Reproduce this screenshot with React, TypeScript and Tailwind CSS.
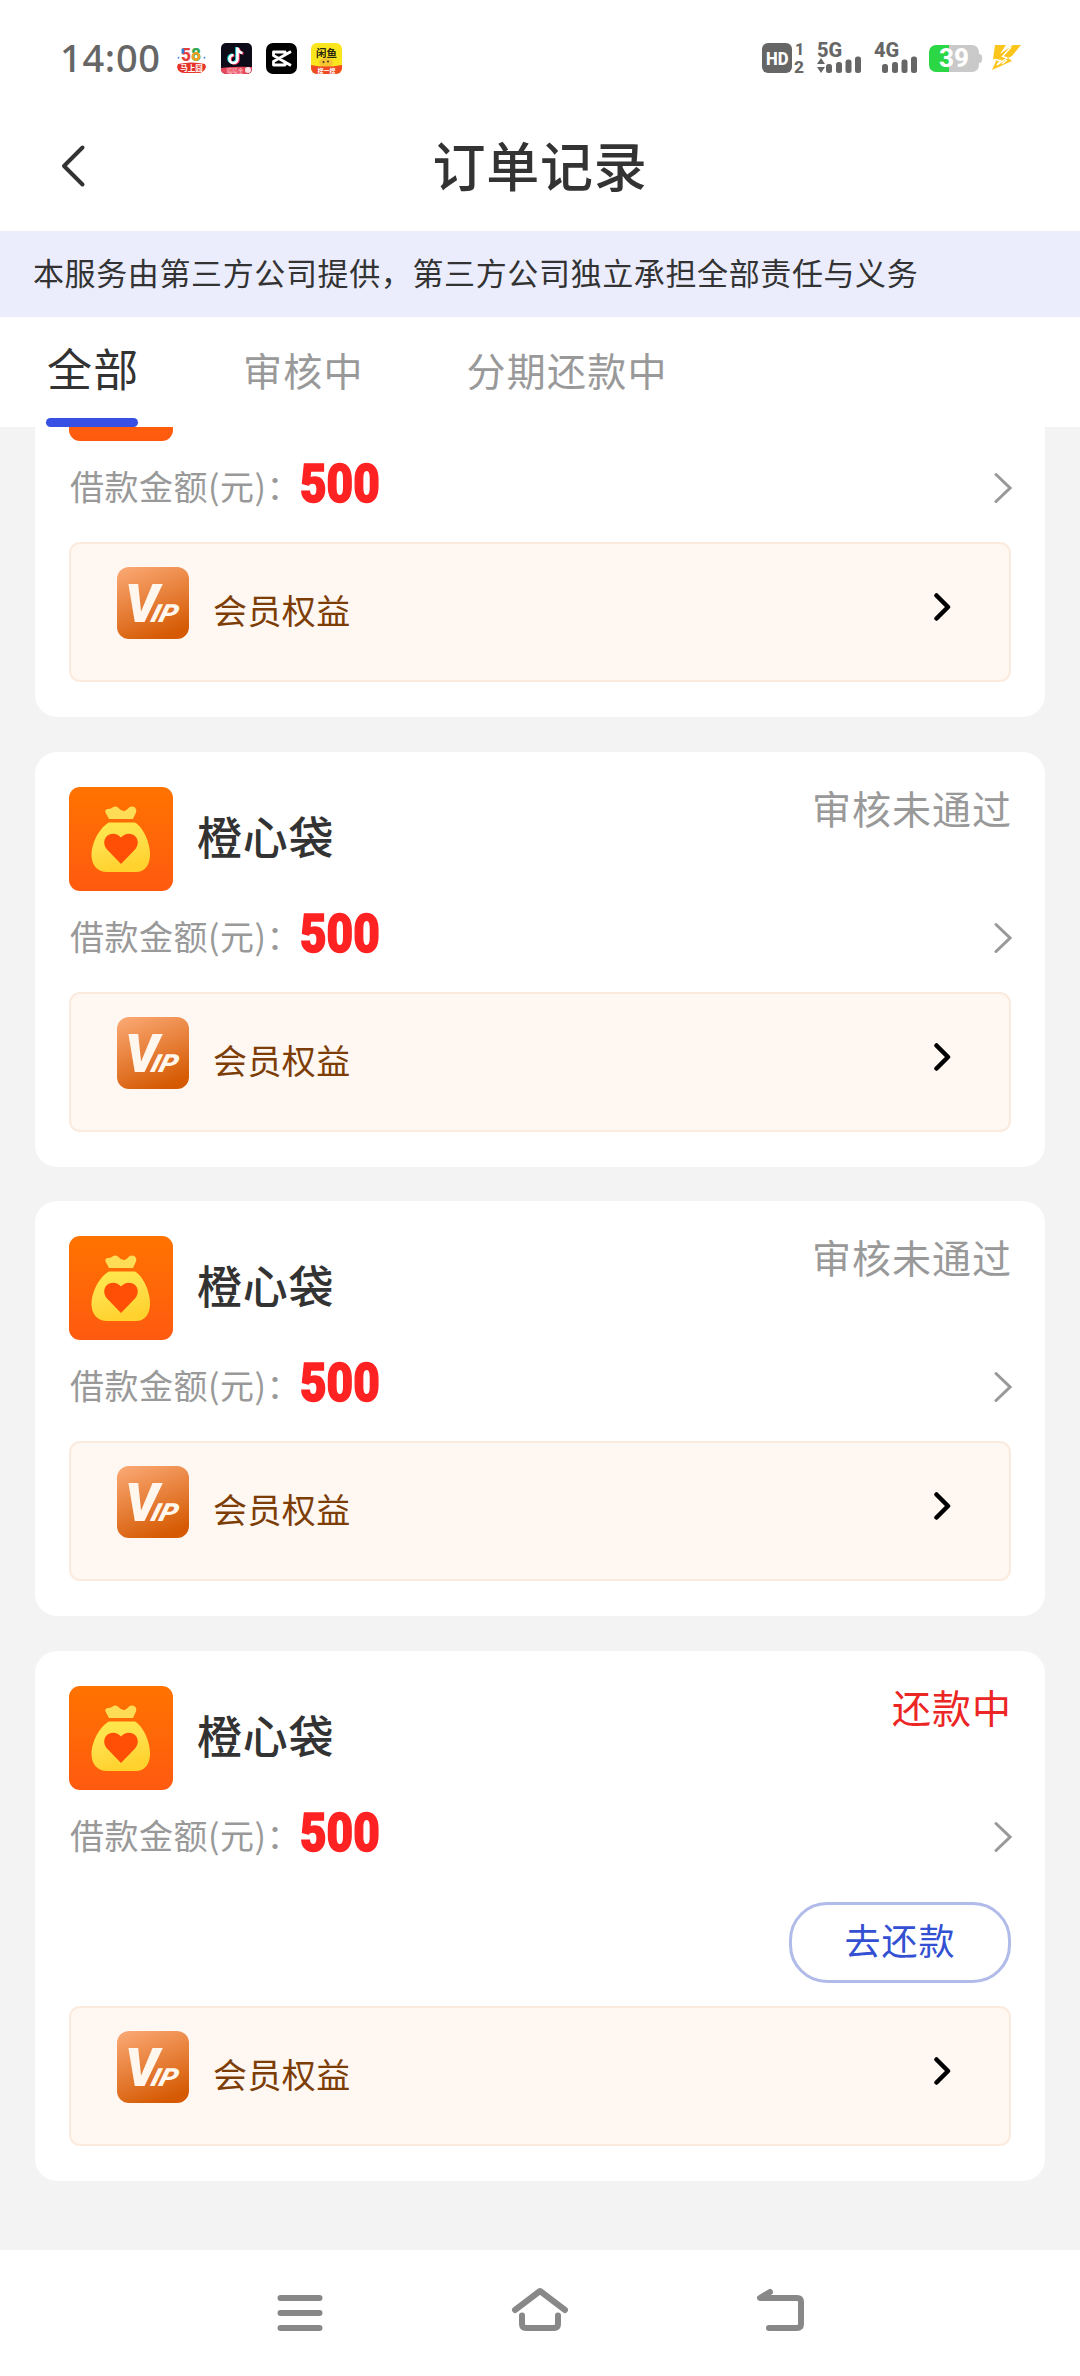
import { clsx } from 'clsx';

type OrderStatus = 'rejected' | 'repaying';

interface Order {
    id: number;
    name: string;
    amount: number;
    status: OrderStatus;
}

const orders: Order[] = [
    { id: 1, name: '橙心袋', amount: 500, status: 'rejected' },
    { id: 2, name: '橙心袋', amount: 500, status: 'rejected' },
    { id: 3, name: '橙心袋', amount: 500, status: 'rejected' },
    { id: 4, name: '橙心袋', amount: 500, status: 'repaying' },
];

const statusText: Record<OrderStatus, string> = {
    rejected: '审核未通过',
    repaying: '还款中',
};

function SignalBars() {
    return (
        <svg className="w-[36px] h-[17px]" viewBox="0 0 36 17" fill="#666">
            <rect x="0" y="8" width="6" height="9" rx="2.5" />
            <rect x="10" y="6" width="6" height="11" rx="2.5" />
            <rect x="19.5" y="3.5" width="6" height="13.5" rx="2.5" />
            <rect x="29" y="0.5" width="6" height="16.5" rx="2.5" />
        </svg>
    );
}

function AppIcons() {
    return (
        <div className="flex items-center gap-[14px] ml-[16px]">
            <svg className="w-[31px] h-[31px]" viewBox="0 0 31 31">
                <text x="5" y="17.5" fontSize="19" fontWeight="800" fontFamily="Roboto, sans-serif" fill="#e2403a" textLength="20" lengthAdjust="spacingAndGlyphs">
                    5<tspan fill="#35a853">8</tspan>
                </text>
                <circle cx="20" cy="13.300" r="3.200" fill="none" stroke="#f0a020" strokeWidth="2.400" />
                <path d="M6.800 5.500v5" fill="none" stroke="#2d7fd8" strokeWidth="2.500" />
                <path d="M3 14l-1 1.500M28 14l1 1.500" stroke="#4d8fe0" strokeWidth="1.500" />
                <path d="M2 21q13.500-3 27 0l1 3q-2 6-8 6H9q-7 0-8-6z" fill="#e5352b" />
                <text x="15.500" y="28" fontSize="7.500" fontWeight="700" textAnchor="middle" fill="#fff" fontFamily="Noto Sans CJK SC, sans-serif">马上囧</text>
            </svg>
            <svg className="w-[31px] h-[31px]" viewBox="0 0 31 31">
                <clipPath id="tk"><rect width="31" height="31" rx="5" /></clipPath>
                <g clipPath="url(#tk)">
                    <rect width="31" height="31" fill="#0d0b18" />
                    <g fill="none" strokeWidth="2.600">
                        <path d="M15.500 4v11.500a4 4 0 1 1-4-4M15.500 5q1 4 5 4.500" stroke="#29e0e5" />
                        <path d="M17.500 5v11.500a4 4 0 1 1-4-4M17.500 5q1 5 5 5.500" stroke="#f3305c" />
                        <path d="M16.500 4.500v11.500a4 4 0 1 1-4-4M16.500 5q1 4.500 5 5" stroke="#fff" />
                    </g>
                    <path d="M0 25q14-2 31-1v7H0z" fill="#e9475c" />
                    <circle cx="27" cy="27" r="3" fill="#fff" opacity=".85" />
                    <text x="14" y="30" fontSize="5.500" textAnchor="middle" fill="#ffd5da" fontFamily="Noto Sans CJK SC, sans-serif">喵喵金</text>
                </g>
            </svg>
            <svg className="w-[31px] h-[31px]" viewBox="0 0 31 31">
                <rect width="31" height="31" rx="7" fill="#000" />
                <path d="M25 8.500 7.500 18.500V22H19v-3.500M25 22.500 7.500 12.500V9H19v3.500" fill="none" stroke="#fff" strokeWidth="2.800" strokeLinejoin="round" />
            </svg>
            <svg className="w-[31px] h-[31px]" viewBox="0 0 31 31">
                <clipPath id="xy"><rect width="31" height="31" rx="6" /></clipPath>
                <g clipPath="url(#xy)">
                    <rect width="31" height="31" fill="#fbe51c" />
                    <ellipse cx="15" cy="19.500" rx="7" ry="5" fill="#f7c532" />
                    <text x="15.500" y="13.500" fontSize="10.500" fontWeight="700" textAnchor="middle" fill="#2b2610" fontFamily="Noto Sans CJK SC, sans-serif">闲鱼</text>
                    <circle cx="12.500" cy="19" r="1" fill="#332" />
                    <circle cx="17" cy="18.500" r="1" fill="#332" />
                    <path d="M0 22q15 3 31 0v9H0z" fill="#ee4a24" />
                    <text x="15.500" y="29.500" fontSize="6" fontWeight="700" textAnchor="middle" fill="#fff" fontFamily="Noto Sans CJK SC, sans-serif">搜一搜</text>
                </g>
            </svg>
        </div>
    );
}

function StatusBar() {
    return (
        <div className="flex items-center h-[116px] pl-[60px] pr-[60px] shrink-0">
            <span className="w-[100px] text-[38px] leading-none font-medium text-[#666] tracking-[0.7px] whitespace-nowrap -mt-[2px] font-['Noto_Sans','sans-serif']">
                14:00
            </span>
            <AppIcons />
            <div className="flex items-center ml-auto text-[#666]">
                <svg className="w-[45px] h-[36px] -mr-[2px]" viewBox="0 -2 45 36" fontFamily="Roboto, sans-serif" fontWeight="800">
                    <rect x="0" y="1" width="30" height="30" rx="6" fill="#666" />
                    <text x="4" y="22.500" fontSize="18" fill="#fff" textLength="22.500" lengthAdjust="spacingAndGlyphs">HD</text>
                    <text x="33" y="12.500" fontSize="16" fill="#666">1</text>
                    <text x="32" y="31" fontSize="16" fill="#666" textLength="10" lengthAdjust="spacingAndGlyphs">2</text>
                </svg>
                <div className="relative w-[45px] h-[32px] ml-[12px]">
                    <span className="absolute left-0 -top-[1px] text-[20px] leading-[18px] font-extrabold font-['Roboto','sans-serif']">5G</span>
                    <svg className="absolute left-0 top-[16px] w-[8px] h-[15px]" viewBox="0 0 8 15" fill="#666">
                        <path d="M4 0l4 6H0zM4 15l4-6H0z" />
                    </svg>
                    <div className="absolute right-0 bottom-[1px]"><SignalBars /></div>
                </div>
                <div className="relative w-[44px] h-[32px] ml-[12px]">
                    <span className="absolute left-0 -top-[1px] text-[20px] leading-[18px] font-extrabold font-['Roboto','sans-serif']">4G</span>
                    <div className="absolute right-0 bottom-[1px]"><SignalBars /></div>
                </div>
                <div className="flex items-center ml-[11px]">
                    <div className="flex items-center justify-center w-[50px] h-[27px] rounded-[7px] bg-[linear-gradient(90deg,#2bd744_40%,#c9c9c9_40%)] text-white text-[26px] leading-none font-extrabold font-['Roboto','sans-serif']">
                        39
                    </div>
                    <div className="w-[3px] h-[9px] rounded-r-sm bg-[#c9c9c9]"></div>
                </div>
                <svg className="w-[30px] h-[26px] ml-[9px] -mr-px" viewBox="0 0 30 26" fill="#fbc51b">
                    <path d="M4 0h11L9 9 22 0h8L21 11l-4 2 4 3L1 25l4-9-3-2z" />
                    <path d="M3 14.500l6.500 1L6 20l10-7-4.500-1.500L20 2M16 15l-5 4" fill="none" stroke="#fff" strokeWidth="1.400" />
                </svg>
            </div>
        </div>
    );
}

function Header() {
    return (
        <div className="relative flex items-center justify-center h-[115px] shrink-0">
            <svg className="absolute left-[60px] top-[28px] w-[26px] h-[44px]" viewBox="0 0 26 44" fill="none" stroke="#333" strokeWidth="4" strokeLinecap="round" strokeLinejoin="round">
                <path d="M22.500 3.500 4 22l18.500 18.500" />
            </svg>
            <h1 className="text-[53px] leading-[60px] font-medium text-[#333] tracking-[0.7px] -mt-[20px]">订单记录</h1>
        </div>
    );
}

function Tabs() {
    return (
        <div className="flex h-[110px] pl-[46px] shrink-0 bg-white text-[39px] text-[#999] leading-[105px] tracking-[1.2px]">
            <div className="flex flex-col justify-between w-[92px] text-[#333]">
                <span className="text-[45px] leading-[101px] whitespace-nowrap pl-[1px]">全部</span>
                <div className="h-[9px] rounded-full bg-[#3550e2]"></div>
            </div>
            <span className="ml-[105px]">审核中</span>
            <span className="ml-[103px]">分期还款中</span>
        </div>
    );
}

function MoneyBagIcon() {
    return (
        <svg className="w-[104px] h-[104px] shrink-0" viewBox="0 0 104 104">
            <defs>
                <linearGradient id="bagBg" x1="0" y1="0" x2="0" y2="1">
                    <stop offset="0" stopColor="#ff7300" />
                    <stop offset="1" stopColor="#ff5a10" />
                </linearGradient>
                <linearGradient id="bag" x1="0" y1="0" x2="0.3" y2="1">
                    <stop offset="0" stopColor="#ffe94a" />
                    <stop offset=".5" stopColor="#ffdf4a" />
                    <stop offset="1" stopColor="#ffd22e" />
                </linearGradient>
            </defs>
            <rect width="104" height="104" rx="11" fill="url(#bagBg)" />
            <path d="M40 32 36.500 25.500q-1-3 2-3.500 3 0 5-1.500 3-2 6 .5 3 3.500 6 3 2.500-1 4-3 3-2.500 6.500-.5 2 2 1 5L64 32z" fill="#ffdc55" />
            <path d="M40 35.500H66C74 40 81.500 56 81 69 80.500 79 75 85 67 85H38C29 85 23 79 22.500 69 22 56 31 40 40 35.500z" fill="url(#bag)" />
            <path d="M52 77 38 62.500C34.500 58.500 34.500 53.500 37 50 41 45.500 48 45.500 52 50.500 56 45.500 63 45.500 67 50 69.500 53.500 69.500 58.500 66 62.500z" fill="#ff4f06" />
        </svg>
    );
}

function VipIcon() {
    return (
        <svg className="w-[72px] h-[72px] mt-[23px] shrink-0" viewBox="0 0 72 72" fontStyle="italic" fontWeight="900" fontFamily="Roboto, sans-serif" fill="#fff7ee">
            <defs>
                <linearGradient id="vipBg" x1="0.2" y1="0" x2="0.6" y2="1">
                    <stop offset="0" stopColor="#f9a56f" />
                    <stop offset="1" stopColor="#d55a03" />
                </linearGradient>
            </defs>
            <rect width="72" height="72" rx="12" fill="url(#vipBg)" />
            <text x="8" y="55" fontSize="53">V</text>
            <text transform="translate(32.5 55) skewX(-16)" fontSize="25" textLength="26" lengthAdjust="spacingAndGlyphs">IP</text>
        </svg>
    );
}

function VipEntry() {
    return (
        <div className="flex h-[140px] pl-[46px] pr-[58px] rounded-[11px] border-2 border-[#fbebdf] bg-[#fff7f1]">
            <VipIcon />
            <span className="ml-[24px] text-[34px] leading-[131px] tracking-[0.4px] text-[#7c3d06]">会员权益</span>
            <svg className="w-[18px] h-[30px] ml-auto mt-[48px]" viewBox="0 0 18 30" fill="none" stroke="#000" strokeWidth="4.500" strokeLinecap="round" strokeLinejoin="round">
                <path d="M3.500 3.500 15 15 3.500 26.500" />
            </svg>
        </div>
    );
}

function OrderCard({ order, collapsed }: { order: Order; collapsed?: boolean }) {
    const repaying = order.status === 'repaying';

    return (
        <div className="shrink-0 px-[34px] py-[35px] rounded-[22px] bg-white">
            <div className="flex h-[104px]">
                <MoneyBagIcon />
                {!collapsed && (
                    <>
                        <span className="ml-[24px] text-[45px] leading-[97px] font-medium text-[#333] tracking-[0.8px]">{order.name}</span>
                        <span className={clsx('ml-auto text-[39px] leading-[41px] tracking-[1px] -mr-px', repaying ? 'text-[#ec2525]' : 'text-[#999]')}>
                            {statusText[order.status]}
                        </span>
                    </>
                )}
            </div>
            <div className="flex items-center h-[101px] pb-[8px]">
                <span className="-mt-[3px] ml-px text-[34px] leading-[40px] tracking-[0.5px] text-[#999] whitespace-nowrap">借款金额(元)：</span>
                <span className="origin-left scale-x-[0.85] -ml-px -mt-[7px] text-[54px] leading-[50px] font-black text-[#ff2222] [-webkit-text-stroke:1.5px_#ff2222] font-['Roboto','sans-serif']">
                    {order.amount}
                </span>
                <svg className="w-[19px] h-[32px] ml-auto mt-[1px] -mr-px" viewBox="0 0 19 32" fill="none" stroke="#999" strokeWidth="3" strokeLinecap="round">
                    <path d="M3 2.500 17 16 3 29.500" />
                </svg>
            </div>
            {repaying && (
                <div className="flex justify-end h-[115px] pt-[11px]">
                    <button className="w-[222px] h-[81px] rounded-[38px] border-[3px] border-[#b0bbea] text-[36px] leading-[68px] pb-[6px] tracking-[1px] text-[#3350d2]">
                        去还款
                    </button>
                </div>
            )}
            <VipEntry />
        </div>
    );
}

function NavBar() {
    return (
        <div className="flex justify-center gap-[174px] h-[126px] pt-[34px] shrink-0 bg-white">
            <svg className="w-[66px] h-[52px]" viewBox="0 0 66 52" fill="none" stroke="#888" strokeWidth="6" strokeLinecap="round">
                <path d="M13.500 14h39M13.500 29h39M13.500 44h39" />
            </svg>
            <svg className="w-[66px] h-[52px]" viewBox="0 0 66 52" fill="none" stroke="#888" strokeWidth="6" strokeLinecap="round" strokeLinejoin="round">
                <path d="M8 26 33 7l25 19M15 31.500V40q0 4 4 4h28q4 0 4-4v-8.500" />
            </svg>
            <svg className="w-[66px] h-[52px]" viewBox="0 0 66 52" fill="none" stroke="#888" strokeWidth="6" strokeLinecap="round" strokeLinejoin="round">
                <path d="M23 8l-10 6h37q4 0 4 4v22q0 4-4 4H22" />
            </svg>
        </div>
    );
}

export default function App() {
    return (
        <div className="flex flex-col w-[1080px] h-[2376px] overflow-hidden bg-white font-['Noto_Sans_CJK_SC','sans-serif']">
            <StatusBar />
            <Header />
            <div className="h-[86px] pl-[33px] shrink-0 bg-[#ebedfd] text-[31px] leading-[82px] tracking-[0.62px] text-[#333]">
                本服务由第三方公司提供，第三方公司独立承担全部责任与义务
            </div>
            <Tabs />
            {/* the list is scrolled, so the first card starts under the tabs */}
            <div className="flex-1 min-h-0 overflow-hidden px-[35px] bg-[#f3f3f3]">
                <div className="flex flex-col gap-[34.5px] -mt-[125px]">
                    {orders.map((order, index) => (
                        <OrderCard key={order.id} order={order} collapsed={index === 0} />
                    ))}
                </div>
            </div>
            <NavBar />
        </div>
    );
}
